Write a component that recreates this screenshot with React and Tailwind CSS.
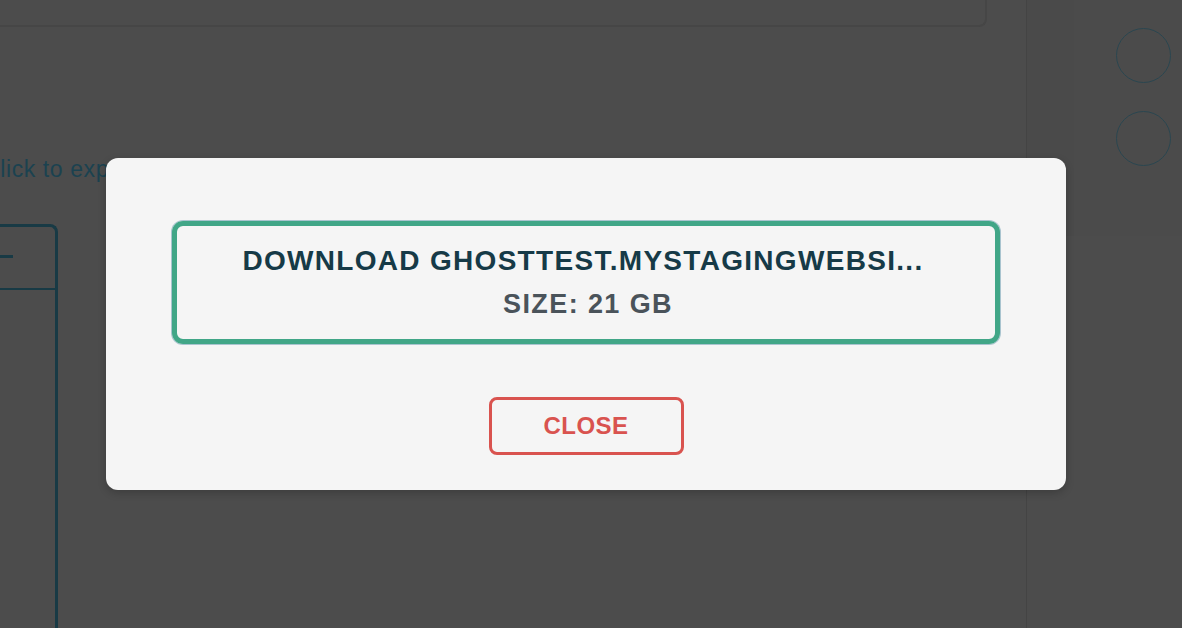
import React from "react";

export default function App() {
  return (
    <div className="relative h-[628px] w-[1182px] overflow-hidden bg-[#4c4c4c] font-['Liberation_Sans',Arial,sans-serif]">
      {/* page behind the overlay, already dimmed */}
      <div className="flex h-full">
        <div className="flex w-[1026px] flex-col">
          <div className="h-[28px] w-[987px] rounded-br-lg border-r-2 border-b-2 border-[#464646]"></div>
          <p className="mt-[128px] -ml-[17px] text-[23px] leading-7 tracking-[0.6px] whitespace-nowrap text-[#1b4250]">Click to expand</p>
          <div className="mt-[41px] -ml-[20px] flex h-[420px] w-[78px] flex-col rounded-tr-lg border-t-[3px] border-r-[3px] border-[#183a45]">
            <div className="h-[63px] border-b-2 border-[#183a45] pt-[28px] pl-[20px]">
              <div className="h-[3px] w-[13px] bg-[#183a45]"></div>
            </div>
          </div>
        </div>
        <div className="flex flex-1 border-l border-[#444]">
          <div className="h-[236px] w-[47px] bg-[#4a4a4a]"></div>
          <div className="flex h-[236px] flex-1 flex-col items-center gap-[28px] bg-[#4b4b4b] pt-[28px] pl-[30px]">
            <div className="h-[55px] w-[55px] rounded-full border border-[#2a4650]"></div>
            <div className="h-[55px] w-[55px] rounded-full border border-[#2a4650]"></div>
          </div>
        </div>
      </div>

      {/* modal */}
      <div className="absolute top-[158px] left-[106px] flex h-[332px] w-[960px] flex-col items-center rounded-xl bg-[#f5f5f5] pt-[63px] shadow-[0_3px_8px_rgba(0,0,0,0.2)]">
        <div className="flex h-[123px] w-[828px] flex-col items-center justify-center gap-[13px] rounded-[11px] border-[5px] border-[#41a687] font-bold shadow-[0_0_0_1px_#a9c4cf]">
          <p className="-ml-[6px] text-[28px] leading-[30px] tracking-[1.3px] text-[#163a47]">DOWNLOAD GHOSTTEST.MYSTAGINGWEBSI...</p>
          <p className="ml-[4px] text-[27px] leading-[30px] tracking-[1.4px] text-[#4a535a]">SIZE: 21 GB</p>
        </div>
        <button className="mt-[53px] h-[58px] w-[195px] rounded-lg border-[3px] border-[#d9534f] text-[24px] font-bold tracking-[0.5px] text-[#d9534f]">
          CLOSE
        </button>
      </div>
    </div>
  );
}
